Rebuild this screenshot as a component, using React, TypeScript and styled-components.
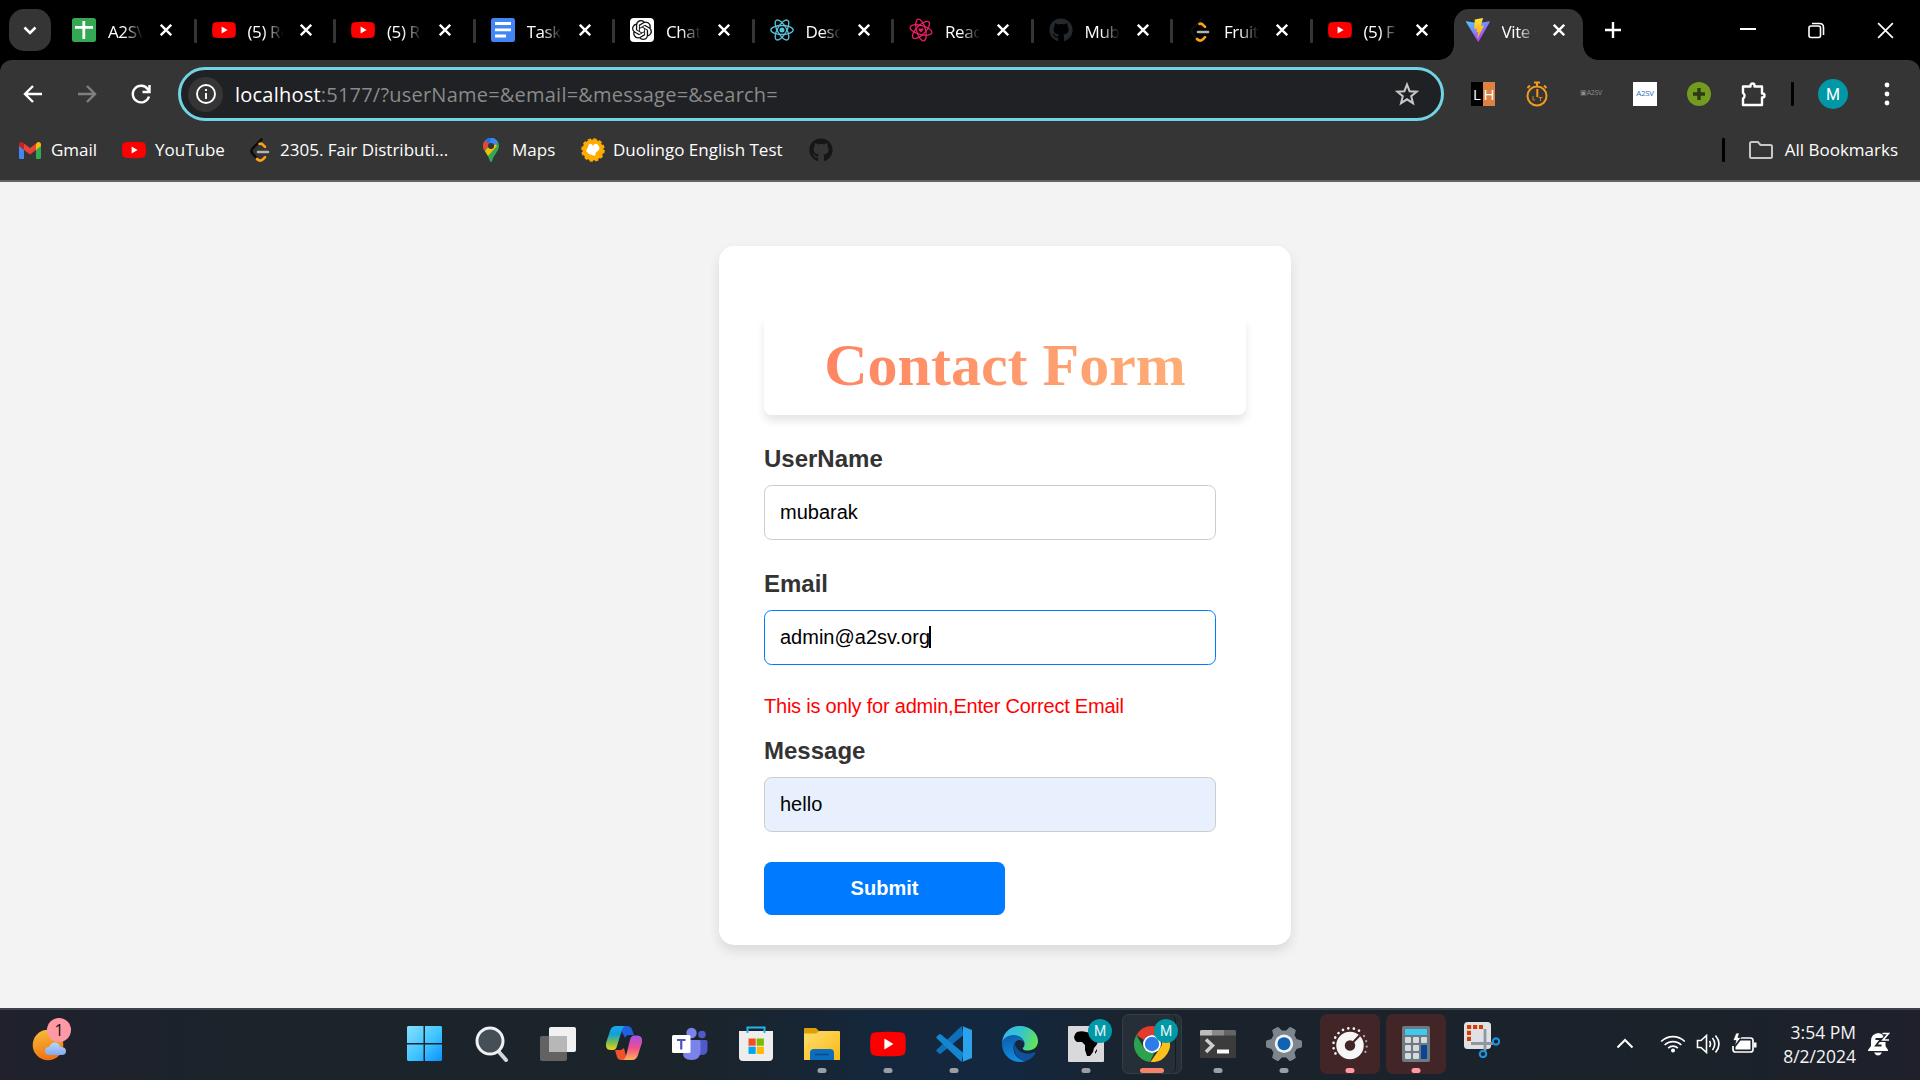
import React from "react";
import styled, { createGlobalStyle, css } from "styled-components";
import { FaGithub } from "react-icons/fa";
import { SiOpenai } from "react-icons/si";

const Global = createGlobalStyle`
  * { box-sizing: border-box; }
  html, body { margin: 0; padding: 0; }
  body { font-family: "Open Sans", "Noto Sans", sans-serif; overflow: hidden; background: #f3f3f3; }
`;

const Screen = styled.div`
  width: 1920px;
  height: 1080px;
  display: flex;
  flex-direction: column;
  overflow: hidden;
`;

/* ---------- tab strip ---------- */
const TabStrip = styled.div`
  height: 60px;
  flex: none;
  background: #000;
  display: flex;
  align-items: stretch;
`;
const TabSearch = styled.div`
  width: 42px;
  height: 42px;
  margin: 9px 6px 9px 9px;
  border-radius: 15px;
  background: #353535;
  display: grid;
  place-items: center;
`;
const Tab = styled.div<{ $active?: boolean; $line?: boolean }>`
  position: relative;
  flex: none;
  width: 139.5px;
  padding: 0 0 0 15px;
  display: flex;
  align-items: center;
  ${(p) =>
    p.$line &&
    css`
      &::after {
        content: "";
        position: absolute;
        right: 0;
        top: 19px;
        width: 3px;
        height: 24px;
        border-radius: 1px;
        background: #353535;
      }
    `}
  ${(p) =>
    p.$active &&
    css`
      width: 129px;
      margin-left: 1.5px;
      height: 51px;
      margin-top: 9px;
      padding: 0 0 9px 12px;
      border-radius: 15px 15px 0 0;
      background: #353535;
      &::before,
      &::after {
        content: "";
        position: absolute;
        bottom: 0;
        width: 15px;
        height: 15px;
      }
      &::before {
        left: -15px;
        background: radial-gradient(circle at 0 0, #000 14.5px, #353535 15px);
      }
      &::after {
        right: -15px;
        background: radial-gradient(circle at 100% 0, #000 14.5px, #353535 15px);
      }
    `}
`;
const TabTitle = styled.span`
  width: 35px;
  margin-left: 12px;
  margin-top: 4px;
  overflow: hidden;
  white-space: nowrap;
  color: #fff;
  font-size: 17px;
  line-height: 24px;
  letter-spacing: -0.4px;
  mask-image: linear-gradient(90deg, #000 45%, transparent 100%);
`;
const TabClose = styled.span<{ $active?: boolean }>`
  display: grid;
  margin-left: ${(p) => (p.$active ? 16 : 17)}px;
`;
const NewTab = styled.div`
  display: grid;
  place-items: center;
  width: 18px;
  margin-left: 21px;
`;
const WindowControls = styled.div`
  margin-left: auto;
  display: flex;
  align-items: center;
  gap: 52px;
  padding-right: 26px;
`;

/* ---------- toolbar ---------- */
const ChromeBody = styled.div`
  height: 122px;
  flex: none;
  background: #000;
  display: flex;
`;
const ToolArea = styled.div`
  flex: 1;
  background: #353535;
  border-radius: 12px 12px 0 0;
  border-bottom: 2px solid #636363;
  display: flex;
  flex-direction: column;
`;
const Toolbar = styled.div`
  height: 61px;
  padding-top: 7px;
  display: flex;
  align-items: center;
`;
const NavButtons = styled.div`
  width: 178px;
  padding-left: 21px;
  display: flex;
  gap: 30px;
`;
const Omnibox = styled.div`
  width: 1266px;
  height: 54px;
  border: 3px solid #70d4e4;
  border-radius: 27px;
  background: #202124;
  display: flex;
  align-items: center;
  padding: 0 22px 0 7px;
`;
const InfoBadge = styled.span`
  width: 35px;
  height: 35px;
  border-radius: 50%;
  background: #353535;
  display: grid;
  place-items: center;
`;
const Url = styled.span`
  flex: 1;
  margin-left: 12px;
  padding-top: 2px;
  font-size: 20px;
  line-height: 28px;
  color: #8a8a8a;
  white-space: nowrap;
  letter-spacing: 0.22px;
  b {
    font-weight: 400;
    color: #fff;
  }
`;
const Extensions = styled.div`
  display: flex;
  align-items: center;
  margin-left: 27px;
  gap: 30px;
`;
const Lh = styled.span`
  display: flex;
  width: 24px;
  height: 24px;
  font-size: 15px;
  line-height: 25px;
  color: #fff;
  text-align: center;
  i {
    font-style: normal;
    width: 12px;
    background: #000;
  }
  i + i {
    background: #dd8243;
  }
`;
const TinyLogo = styled.span<{ $light?: boolean }>`
  width: 24px;
  height: 24px;
  font-size: ${(p) => (p.$light ? 8 : 7)}px;
  letter-spacing: -0.3px;
  line-height: 22px;
  text-align: center;
  white-space: nowrap;
  font-weight: 400;
  background: ${(p) => (p.$light ? "#fff" : "transparent")};
  color: ${(p) => (p.$light ? "#2f74b8" : "#8c8c8c")};
`;
const Divider = styled.span`
  width: 3px;
  height: 24px;
  border-radius: 1px;
  background: #000;
`;
const Account = styled.div`
  display: flex;
  align-items: center;
  gap: 24px;
  margin-left: -5px;
`;
const Avatar = styled.span`
  width: 30px;
  height: 30px;
  margin-right: 12px;
  border-radius: 50%;
  background: #0097a7;
  color: #fff;
  font: 400 16px/31px Roboto, sans-serif;
  text-align: center;
`;
const BookmarkBar = styled.div`
  height: 58px;
  display: flex;
  align-items: center;
  padding: 0 22px 0 19px;
`;
const Bookmark = styled.span<{ $w: number; $gap?: number }>`
  width: ${(p) => p.$w}px;
  display: flex;
  align-items: center;
  gap: ${(p) => p.$gap ?? 9}px;
  font-size: 17px;
  line-height: 24px;
  color: #fff;
  white-space: nowrap;
  svg {
    flex: none;
  }
`;
const AllBookmarks = styled.span`
  margin-left: auto;
  display: flex;
  align-items: center;
  font-size: 17px;
  line-height: 24px;
  color: #fff;
  white-space: nowrap;
  svg {
    margin: 0 12px 0 24px;
  }
`;

/* ---------- page ---------- */
const Page = styled.main`
  height: 826px;
  flex: none;
  background: #f3f3f3;
  display: flex;
  justify-content: center;
  align-items: flex-start;
  padding: 64px 0 0 90px;
`;
const Card = styled.form`
  width: 572px;
  height: 699px;
  background: #fff;
  border-radius: 15px;
  box-shadow: 0 6px 12px rgba(0, 0, 0, 0.1);
  padding: 69px 45px 0;
  font-family: "Liberation Sans", Arial, sans-serif;
`;
const Heading = styled.h1`
  margin: 0 0 29px;
  height: 100px;
  border-radius: 7.5px;
  box-shadow: 0 6px 9px rgba(0, 0, 0, 0.1);
  text-align: center;
  font: 700 60px/101px "Liberation Serif", "Times New Roman", serif;
  span {
    display: block;
    background: linear-gradient(90deg, #ff7e5f, #feb47b);
    background-clip: text;
    -webkit-background-clip: text;
    color: transparent;
  }
`;
const Label = styled.label`
  display: block;
  height: 41px;
  font-size: 24px;
  font-weight: 700;
  line-height: 30px;
  color: #333;
`;
const Field = styled.div<{ $focus?: boolean; $filled?: boolean; $after: number }>`
  width: 452px;
  height: 55px;
  margin-bottom: ${(p) => p.$after}px;
  border: 1px solid ${(p) => (p.$focus ? "#007bff" : "#ccc")};
  border-radius: 7.5px;
  background: ${(p) => (p.$filled ? "#e8f0fe" : "#fff")};
  padding: 0 15px 2px;
  display: flex;
  align-items: center;
  font-size: 20px;
  line-height: 22px;
  color: #000;
`;
const Caret = styled.span`
  width: 2px;
  height: 22px;
  margin-left: -1px;
  background: #000;
`;
const ErrorText = styled.p`
  margin: 0 0 18px;
  font-size: 20px;
  line-height: 24px;
  letter-spacing: -0.22px;
  color: #f00;
`;
const Submit = styled.button`
  display: block;
  width: 241px;
  height: 53px;
  padding: 0 0 2px;
  border: 0;
  border-radius: 7.5px;
  background: #007bff;
  color: #fff;
  font: 700 20px/24px "Liberation Sans", Arial, sans-serif;
`;

/* ---------- taskbar ---------- */
const Taskbar = styled.footer`
  height: 72px;
  flex: none;
  border-top: 2px solid #3b4348;
  background: linear-gradient(90deg, #20212c 0, #1b232b 240px, #1b242b 700px, #14273c 880px, #13273f 1010px, #1a232c 1140px, #1a222a 1700px, #1f202b 1920px);
  display: flex;
  align-items: center;
`;
const Weather = styled.div`
  width: 396px;
  padding-left: 30px;
  display: flex;
`;
const WeatherIcon = styled.div`
  position: relative;
  width: 42px;
  height: 44px;
  margin-top: -8px;
`;
const Count = styled.span`
  position: absolute;
  right: 1px;
  top: -1px;
  width: 24px;
  height: 24px;
  border-radius: 50%;
  background: #ff99a4;
  color: #111;
  font-size: 16px;
  line-height: 24px;
  text-align: center;
`;
const Apps = styled.div`
  display: flex;
  gap: 6px;
  margin-top: -2px;
`;
const AppTile = styled.div<{ $bg?: string; $nudge?: number; $shift?: number }>`
  position: relative;
  width: 60px;
  height: 60px;
  border-radius: 7px;
  background: ${(p) => p.$bg ?? "transparent"};
  display: grid;
  place-items: center;
  & > svg {
    margin-top: ${(p) => p.$nudge ?? 0}px;
    margin-left: ${(p) => p.$shift ?? 0}px;
  }
`;
const StackEdge = styled.span`
  position: absolute;
  inset: 0;
  border: 1px solid #343c44;
  border-radius: 7px;
  &::after {
    content: "";
    position: absolute;
    top: -1px;
    bottom: -1px;
    right: 5px;
    width: 8px;
    border-right: 1px solid #151b21;
    border-radius: 0 7px 7px 0;
  }
`;
const Indicator = styled.span<{ $c: string; $w?: number }>`
  position: absolute;
  bottom: 1px;
  left: 50%;
  width: ${(p) => p.$w ?? 9}px;
  height: 5px;
  border-radius: 3px;
  transform: translateX(-50%);
  background: ${(p) => p.$c};
`;
const Badge = styled.span`
  position: absolute;
  right: 4px;
  top: 5px;
  width: 24px;
  height: 24px;
  border-radius: 50%;
  background: #0097a7;
  color: #e3f4f6;
  font: 400 14px/24px Roboto, sans-serif;
  text-align: center;
`;
const Tray = styled.div`
  margin-left: auto;
  padding-right: 30px;
  margin-top: -3px;
  display: flex;
  align-items: center;
`;
const TrayIcons = styled.div`
  display: flex;
  align-items: center;
  gap: 10px;
  margin-left: 26px;
  margin-right: 1px;
`;
const Clock = styled.div`
  width: 98px;
  margin-right: 12px;
  padding-top: 1px;
  text-align: right;
  color: #f4f4f4;
  font-size: 17.500px;
  line-height: 24px;
  letter-spacing: 0;
`;

/* ---------- icons ---------- */
const Cross = ({ s = 12, w = 2.4 }: { s?: number; w?: number }) => (
  <svg width={s} height={s} viewBox="0 0 12 12" stroke="#fff" strokeWidth={(w * 12) / s} fill="none">
    <path d="M.8.8 11.2 11.2M11.2.8.8 11.2" />
  </svg>
);
const YouTube = ({ s = 24 }: { s?: number }) => (
  <svg width={s} height={s} viewBox="0 0 24 24">
    <path fill="#f00" d="M3.5 4.2Q12 3.5 20.5 4.2 23.2 4.4 23.6 7q.5 5 0 10-.4 2.600-3.100 2.800-8.500.7-17 0Q.8 19.600.4 17q-.6-5 0-10Q.8 4.400 3.500 4.200Z" />
    <path fill="#fff" d="M9.600 8.400v7.200l6-3.600z" />
  </svg>
);
const Sheet = () => (
  <svg width="24" height="24" viewBox="0 0 24 24">
    <rect width="24" height="24" rx="2.500" fill="#34a853" />
    <path d="M11.800 3v18M3 9.300h18" stroke="#fff" strokeWidth="2.800" />
  </svg>
);
const Doc = () => (
  <svg width="24" height="24" viewBox="0 0 24 24">
    <rect width="24" height="24" rx="2.500" fill="#4285f4" />
    <path d="M4 5.500h16M4 11.800h16M4 18h11" stroke="#fff" strokeWidth="2.800" />
  </svg>
);
const Gpt = () => (
  <svg width="24" height="24" viewBox="0 0 24 24">
    <rect width="24" height="24" rx="4" fill="#fff" />
    <SiOpenai x="2" y="2" size={20} color="#111" />
  </svg>
);
const Atom = ({ c, r = 0, heart }: { c: string; r?: number; heart?: boolean }) => (
  <svg width="24" height="24" viewBox="0 0 24 24" fill="none" stroke={c} strokeWidth="1.300">
    <g transform={`rotate(${r} 12 12)`}>
      <ellipse cx="12" cy="12" rx="11.200" ry="4.500" />
      <ellipse cx="12" cy="12" rx="11.200" ry="4.500" transform="rotate(60 12 12)" />
      <ellipse cx="12" cy="12" rx="11.200" ry="4.500" transform="rotate(120 12 12)" />
    </g>
    {heart ? (
      <path d="M12 14.500 9.700 12c-.9-1.500 1.400-2.600 2.300-1 .9-1.600 3.200-.5 2.300 1z" fill={c} stroke="none" />
    ) : (
      <circle cx="12" cy="12" r="2.500" fill={c} stroke="none" />
    )}
  </svg>
);
const Leet = ({ dark }: { dark: string }) => (
  <svg width="24" height="24" viewBox="0 0 24 24" fill="none" strokeLinecap="round" strokeWidth="2.600">
    <path d="M13.500 1.500 4.500 10.500Q2.500 13 4.500 15.500L8.500 20" stroke={dark} />
    <path d="M11.500 6q2-1 3.500.8l2 2M9 21q3 3 6 .3l2-2.100" stroke="#ffa116" />
    <path d="M10 14h10" stroke="#b3b3b3" />
  </svg>
);
const Vite = () => (
  <svg width="24" height="24" viewBox="0 0 24 24">
    <defs>
      <linearGradient id="va" x1="0" y1="0" x2=".6" y2="1">
        <stop offset="0" stopColor="#41d1ff" />
        <stop offset="1" stopColor="#bd34fe" />
      </linearGradient>
      <linearGradient id="vb" x1="0" y1="0" x2="0" y2="1">
        <stop offset="0" stopColor="#ffea83" />
        <stop offset=".1" stopColor="#ffdd35" />
        <stop offset="1" stopColor="#ffa800" />
      </linearGradient>
    </defs>
    <path fill="url(#va)" d="M.3 3.200 12 5.200 23.500 3.200q.5.100.3.700L12.700 23.600q-.4.500-.8 0L0 3.900q-.2-.600.3-.7Z" />
    <path fill="url(#vb)" d="m17 0-8.200 1.600L8.200 11l2.800-.5-.8 4 2.200-.6-1.200 5.500q.3 1.200 1.100-.1L18 7.500l-3 .5z" />
  </svg>
);
const Gmail = () => (
  <svg width="22" height="17" viewBox="0 0 22 17">
    <path fill="#4285f4" d="M0 3v12.500Q0 17 1.500 17H5V7z" />
    <path fill="#34a853" d="M22 3v12.500q0 1.500-1.500 1.500H17V7z" />
    <path fill="#fbbc04" d="M17 2v6l5-4V2.400C22 .2 19.500-.7 17.800.7z" />
    <path fill="#ea4335" d="M5 8V1.500l6 4.500 6-4.500V8l-6 4.500z" />
    <path fill="#c5221f" d="M0 2.400V4l5 4V1.500L4.200.8C2.500-.6 0 .2 0 2.400Z" />
  </svg>
);
const MapPin = () => (
  <svg width="16" height="24" viewBox="0 0 16 24">
    <defs>
      <clipPath id="pin">
        <path d="M8 0a8 8 0 0 1 8 8c0 5-5 8-6.700 14.600q-.3 1.400-1.300 1.400t-1.300-1.400C5 16 0 13 0 8a8 8 0 0 1 8-8Z" />
      </clipPath>
    </defs>
    <g clipPath="url(#pin)">
      <path fill="#34a853" d="M0 0h16v24H0z" />
      <path fill="#4285f4" d="M2 0h13v4L8 11 2 4z" />
      <path fill="#1a73e8" d="M8 0h-6v4l4 3z" />
      <path fill="#ea4335" d="M0 0 2 2.500 6.500 6 2 12H0z" />
      <path fill="#fbbc04" d="m2 13 8-9 4 4-9 10z" />
      <path fill="#4285f4" d="M11 0 14.500 3.500 10 9 8 5z" />
    </g>
    <circle cx="8" cy="8" r="3" fill="#3a3335" />
  </svg>
);
const Duo = () => (
  <svg width="24" height="24" viewBox="0 0 24 24">
    <circle cx="12" cy="12" r="10.600" fill="#ffab00" stroke="#ffab00" strokeWidth="2.400" strokeDasharray="3.300 2.250" />
    <path fill="#fff" d="M8 6q3-1 4 2 2-4 5-1 3 3 0 6l-2 1-1 4-3-1-3-1-3-3 1-2 1-2z" />
  </svg>
);
const Stopwatch = () => (
  <svg width="24" height="26" viewBox="0 0 24 26" fill="none" stroke="#f39a1e" strokeWidth="2">
    <circle cx="12" cy="15" r="9.500" />
    <path d="M9 1.500h6M12 2v4M2.500 7 5 4.500M21.500 7 19 4.500M12.300 8v8" />
    <path d="M8 15v4h2M13.500 16.500h4M15.500 17v3" stroke="#c9852c" strokeWidth="1" />
  </svg>
);

const TABS: { title: string; icon: React.ReactNode }[] = [
  { title: "A2SV", icon: <Sheet /> },
  { title: "(5) Re", icon: <YouTube /> },
  { title: "(5) Re", icon: <YouTube /> },
  { title: "Task", icon: <Doc /> },
  { title: "Chat", icon: <Gpt /> },
  { title: "Desc", icon: <Atom c="#58c4dc" /> },
  { title: "Reac", icon: <Atom c="#e91e63" r={15} heart /> },
  { title: "Mub", icon: <FaGithub size={24} color="#24292e" /> },
  { title: "Fruit", icon: <Leet dark="#0d0d0d" /> },
  { title: "(5) F", icon: <YouTube /> },
];

const GREY = "#999fa5";
const PINK = "#ff99a4";

const WinStart = () => (
  <svg width="36" height="36" viewBox="0 0 36 36">
    <defs>
      <linearGradient id="ws" x1="0" y1="0" x2="1" y2="1">
        <stop offset="0" stopColor="#86e0ff" />
        <stop offset=".55" stopColor="#3fc4ff" />
        <stop offset="1" stopColor="#0a92ff" />
      </linearGradient>
    </defs>
    <path fill="url(#ws)" d="M1 0h15.500v17H0V1zM18 0h16l1 1v16H18zM0 18.500h16.500V35H1l-1-1zM18 18.500h17V34l-1 1H18z" />
  </svg>
);
const Search = () => (
  <svg width="34" height="36" viewBox="0 0 34 36">
    <path d="m24 26 7 8" stroke="#d4d7dc" strokeWidth="4" strokeLinecap="round" />
    <circle cx="15" cy="15" r="13" fill="#464e56" stroke="#f0f1f3" strokeWidth="3" />
  </svg>
);
const TaskView = () => (
  <svg width="36" height="36" viewBox="0 0 36 36">
    <rect x="0" y="10" width="27" height="25" rx="2" fill="#626262" />
    <rect x="9" y="1" width="27" height="25" rx="2" fill="#f1f1f1" />
    <path d="M9 10h18v16H9z" fill="#b7b7b7" />
  </svg>
);
const Copilot = () => (
  <svg width="36" height="34" viewBox="0 0 36 34">
    <defs>
      <linearGradient id="ca" x1="0" y1="0" x2="0" y2="1">
        <stop offset="0" stopColor="#16a8f0" />
        <stop offset=".35" stopColor="#129fd8" />
        <stop offset=".7" stopColor="#7cc04b" />
        <stop offset="1" stopColor="#f6d11c" />
      </linearGradient>
      <linearGradient id="cb" x1="0" y1="0" x2="0" y2="1">
        <stop offset="0" stopColor="#a650e8" />
        <stop offset=".5" stopColor="#ee4f8e" />
        <stop offset="1" stopColor="#ffb057" />
      </linearGradient>
    </defs>
    <path fill="#1f5fe0" d="M13 0h8q4 0 5.200 4L28 9h-5q-3 0-4 3z" />
    <path fill="#f0522c" d="M9 24h6l3-2 3 12h-6q-3 0-4-3z" />
    <path fill="url(#ca)" d="M10 0h9q-2 1-3 4l-5 16q-1 4-4 4H5q-6 0-5-7L4 5q1.500-5 6-5Z" />
    <path fill="url(#cb)" d="M26 34h-9q2-1 3-4l4-16q1-4.500 4-4.500h3q6 0 5 7L32 29q-1.500 5-6 5Z" />
  </svg>
);
const Teams = () => (
  <svg width="36" height="34" viewBox="0 0 36 34">
    <circle cx="30" cy="7.500" r="3.800" fill="#5059c9" />
    <path d="M25 13h9q1.500 0 1.500 1.500V22q0 6-6 6h-4.500z" fill="#5059c9" />
    <circle cx="19.500" cy="6" r="5.200" fill="#7b83eb" />
    <path d="M11 13h16q1.500 0 1.500 1.500V24q0 9-9 9t-8.500-8z" fill="#7b83eb" />
    <rect x="0" y="8" width="18.500" height="18" rx="1.500" fill="#fff" />
    <path d="M5 13h8.500M9.250 13v9.500" stroke="#4b53bc" strokeWidth="2.200" />
  </svg>
);
const Store = () => (
  <svg width="36" height="36" viewBox="0 0 36 36">
    <path d="M1 5h34v26q0 4-4 4H5q-4 0-4-4z" fill="#ededed" />
    <path d="M9.500 7V1.500h17V7" fill="none" stroke="#22b4ea" strokeWidth="2" />
    <path fill="#f25022" d="M10.500 12.500h7.200v7.200h-7.200z" />
    <path fill="#7fba00" d="M18.700 12.500h7.200v7.200h-7.200z" />
    <path fill="#00a4ef" d="M10.500 20.700h7.200v7.200h-7.200z" />
    <path fill="#ffb900" d="M18.700 20.700h7.200v7.200h-7.200z" />
  </svg>
);
const Explorer = () => (
  <svg width="36" height="34" viewBox="0 0 36 34">
    <defs>
      <linearGradient id="ex" x1="0" y1="0" x2="1" y2="1">
        <stop offset="0" stopColor="#ffdd70" />
        <stop offset="1" stopColor="#f9b912" />
      </linearGradient>
    </defs>
    <path d="M0 1.500Q0 1 1 1h11l3 3h20v10H0z" fill="#dd9f08" />
    <path d="M0 6.500h12L15.500 4H35q1 0 1 1v28H0z" fill="url(#ex)" />
    <path d="M6 33v-7q0-4 4-4h16q4 0 4 4v7z" fill="#0c6dbc" />
    <path d="M11 27.500h14" stroke="#0a4a86" strokeWidth="1.500" />
  </svg>
);
const Code = () => (
  <svg width="36" height="36" viewBox="0 0 36 36">
    <path fill="#0f6fb8" d="M.7 25.500q-.9-1 .2-2L25.500 0l2 9L5 27.500q-1 .8-2 0z" />
    <path fill="#1485cf" d="M.7 10.500q-.9 1 .2 2L25.500 36l2-9L5 8.500q-1-.8-2 0z" />
    <path fill="#2ba3ec" d="M26 0 36 4v28l-10 4q1-.5 1-2V2q0-1.500-1-2z" />
  </svg>
);
const Edge = () => (
  <svg width="36" height="36" viewBox="0 0 36 36">
    <defs>
      <linearGradient id="ea" x1="0" y1=".3" x2="1" y2=".6">
        <stop offset="0" stopColor="#37b5ee" />
        <stop offset=".5" stopColor="#36c6c8" />
        <stop offset="1" stopColor="#66e355" />
      </linearGradient>
      <linearGradient id="eb" x1="0" y1="0" x2=".3" y2="1">
        <stop offset="0" stopColor="#0a5aa8" />
        <stop offset="1" stopColor="#128be0" />
      </linearGradient>
    </defs>
    <path fill="url(#ea)" d="M0 17C1 6 9 0 18 0c10 0 18 7 18 15 0 6-4.500 9.500-10 9.500-4 0-6-1.500-5-2.700 1-1 1.500-2 1.500-3.800 0-4-4-8-10-8C6 10 2 13 0 17Z" />
    <path fill="url(#eb)" d="M0 18c0-5 5-9 12-9 6 0 10 4 10.500 8-1-2-3-3-5-3-4 0-6 4-6 8 0 7 5 12 12 13.300C20 36.200 18 36 18 36 8 36 0 28 0 18Z" />
    <path fill="#0e509a" d="M13 17c-3 7 1 17 11 18 5-1.500 8-5 9.500-8 .3-.8-.4-1-1-.7C25 29.500 14 27 13 17Z" />
  </svg>
);
const Africa = () => (
  <svg width="36" height="36" viewBox="0 0 36 36">
    <rect width="36" height="36" rx="1" fill="#d9d9dc" />
    <path d="M9 6q5-1.500 9 0l5 1 3 8 4 1q-1 3-4 6l-1 4-3 4h-3l-2-6v-5l-3-3H9q-3-2-3-5 1-4 3-5z" fill="#000" />
    <path d="m27 26 2-3v2l-2 3z" fill="#000" />
  </svg>
);
const Chrome = () => (
  <svg width="36" height="36" viewBox="0 0 36 36">
    <path fill="#e33b2e" d="M18 0a18 18 0 0 1 15.600 9H18a9 9 0 0 0-8 5L2.400 9A18 18 0 0 1 18 0Z" />
    <path fill="#2ba24c" d="M2.400 9 10.200 22.500a9 9 0 0 0 10.300 4L16 36A18 18 0 0 1 2.400 9Z" />
    <path fill="#fcc21b" d="M33.600 9A18 18 0 0 1 16.500 36l9.300-13.500A9 9 0 0 0 24 9z" />
    <circle cx="18" cy="18" r="9" fill="#fff" />
    <circle cx="18" cy="18" r="7.200" fill="#2b7de9" />
  </svg>
);
const Terminal = () => (
  <svg width="36" height="28" viewBox="0 0 36 28">
    <rect y="1" width="36" height="27" rx="1.500" fill="#3c3c3c" />
    <path d="M1 0h11v5.500H0V1z" fill="#bcbcbc" />
    <path d="M12 0h12v5.500H12z" fill="#8a8a8a" />
    <path d="M24 0h11l1 1v4.500H24z" fill="#646464" />
    <path d="m6 9.500 6.500 6L6 22" fill="none" stroke="#cfcfcf" strokeWidth="3.500" />
    <path d="M17 19.500h12v4H17z" fill="#fafafa" />
  </svg>
);
const Gear = () => (
  <svg width="36" height="36" viewBox="0 0 36 36">
    <g fill="#7d868f">
      <circle cx="18" cy="18" r="13.500" />
      {[0, 60, 120, 180, 240, 300].map((a) => (
        <path key={a} transform={`rotate(${a + 30} 18 18)`} d="M12.500 8 14.200 1.200Q14.500 0 15.700 0h4.600q1.200 0 1.500 1.200L23.500 8z" />
      ))}
    </g>
    <circle cx="18" cy="17.700" r="9.200" fill="#f1f1f1" />
    <circle cx="18" cy="17.700" r="6.500" fill="#0f62b4" />
  </svg>
);
const Dial = () => (
  <svg width="36" height="36" viewBox="0 0 36 36">
    <circle cx="18" cy="19.500" r="9.500" fill="none" stroke="#f6f6f6" strokeWidth="8.500" />
    <path d="m18 19.500 9.500-10" stroke="#432425" strokeWidth="2" />
    <path d="M3.500 27.500A17 17 0 0 1 29 6" fill="none" stroke="#f6f6f6" strokeWidth="2.600" strokeLinecap="round" strokeDasharray=".1 5.400" />
    <path d="M32 10A17 17 0 0 1 32 28.500" fill="none" stroke="#b6a5a6" strokeWidth="2.200" strokeLinecap="round" strokeDasharray=".1 5.400" />
  </svg>
);
const Calc = () => (
  <svg width="28" height="36" viewBox="0 0 28 36">
    <rect width="28" height="36" rx="2" fill="#6f7981" />
    <rect x="3" y="3" width="22" height="6" rx=".8" fill="#3ccbee" />
    <g fill="#d5dade">
      {[11, 19, 27].map((y) =>
        [3, 11, 19].map((x) => (x === 19 && y > 11 ? null : <rect key={`${x}-${y}`} x={x} y={y} width="6" height="6" rx="1" />)),
      )}
    </g>
    <rect x="19" y="19" width="6" height="14" rx="1" fill="#0a4595" />
  </svg>
);
const Snip = () => (
  <svg width="36" height="36" viewBox="0 0 36 36">
    <rect x="0" y="0" width="27" height="27" rx="3.500" fill="#dfe2e5" />
    <path d="M5 19V5h14" fill="none" stroke="#d83b01" strokeWidth="4" strokeDasharray="4.200 1.800" />
    <path d="M21 7v22M7 21.500h22" stroke="#90989f" strokeWidth="2.800" />
    <circle cx="32" cy="19.500" r="3.200" fill="none" stroke="#1e90e0" strokeWidth="2.200" />
    <circle cx="19" cy="32" r="3.200" fill="none" stroke="#1e90e0" strokeWidth="2.200" />
  </svg>
);

type AppEntry = {
  icon: React.ReactNode;
  bg?: string;
  mark?: string;
  markWidth?: number;
  badge?: boolean;
  nudge?: number;
  shift?: number;
  stack?: boolean;
};
const APPS: AppEntry[] = [
  { icon: <WinStart />, shift: -3 },
  { icon: <Search /> },
  { icon: <TaskView /> },
  { icon: <Copilot />, nudge: -2 },
  { icon: <Teams /> },
  { icon: <Store />, shift: -1 },
  { icon: <Explorer />, mark: GREY },
  { icon: <YouTube s={36} />, mark: GREY },
  { icon: <Code />, mark: GREY },
  { icon: <Edge /> },
  { icon: <Africa />, mark: GREY, badge: true },
  { icon: <Chrome />, mark: "#f9826a", markWidth: 24, badge: true, bg: "#262f37", stack: true },
  { icon: <Terminal />, mark: GREY },
  { icon: <Gear />, mark: GREY },
  { icon: <Dial />, mark: PINK, bg: "#422526" },
  { icon: <Calc />, mark: PINK, bg: "#422526" },
  { icon: <Snip />, nudge: -9 },
];

export default function App() {
  return (
    <Screen>
      <Global />
      <TabStrip>
        <TabSearch>
          <svg width="14" height="9" viewBox="0 0 14 9" fill="none" stroke="#fff" strokeWidth="2.600">
            <path d="m1.500 1.500 5.500 5.500 5.500-5.500" />
          </svg>
        </TabSearch>
        {TABS.map((t, i) => (
          <Tab key={i} $line={i < TABS.length - 1}>
            {t.icon}
            <TabTitle>{t.title}</TabTitle>
            <TabClose><Cross /></TabClose>
          </Tab>
        ))}
        <Tab $active>
          <Vite />
          <TabTitle>Vite +</TabTitle>
          <TabClose $active><Cross /></TabClose>
        </Tab>
        <NewTab>
          <svg width="16" height="16" viewBox="0 0 16 16" stroke="#fff" strokeWidth="2.400">
            <path d="M8 0v16M0 8h16" />
          </svg>
        </NewTab>
        <WindowControls>
          <svg width="16" height="16" viewBox="0 0 16 16"><path d="M0 7h16" stroke="#fff" strokeWidth="2" /></svg>
          <svg width="17" height="17" viewBox="0 0 17 17" fill="none" stroke="#fff" strokeWidth="1.600">
            <rect x="1" y="4" width="11.500" height="11.500" rx="2" />
            <path d="M4 1.500h7.500q4 0 4 4V13" />
          </svg>
          <Cross s={17} w={1.7} />
        </WindowControls>
      </TabStrip>

      <ChromeBody>
        <ToolArea>
          <Toolbar>
            <NavButtons>
              <svg width="24" height="24" viewBox="0 0 24 24" fill="none" stroke="#fff" strokeWidth="2.400"><path d="M21 12H4.500M12 4l-8 8 8 8" /></svg>
              <svg width="24" height="24" viewBox="0 0 24 24" fill="none" stroke="#808080" strokeWidth="2.400"><path d="M3 12h16.500M12 4l8 8-8 8" /></svg>
              <svg width="24" height="24" viewBox="0 0 24 24" fill="none" stroke="#fff" strokeWidth="2.400"><path d="M20 14.500a8.300 8.300 0 1 1-1.200-7.300L20.500 9M20.500 3v7h-7" /></svg>
            </NavButtons>
            <Omnibox>
              <InfoBadge>
                <svg width="20" height="20" viewBox="0 0 20 20" fill="none" stroke="#fff" strokeWidth="1.900"><circle cx="10" cy="10" r="9" /><path d="M10 9v6M10 5v2" /></svg>
              </InfoBadge>
              <Url><b>localhost</b>:5177/?userName=&amp;email=&amp;message=&amp;search=</Url>
              <svg width="24" height="24" viewBox="0 0 24 24" fill="none" stroke="#c7c7c7" strokeWidth="2"><path d="m12 2.500 2.600 6.700 7.100.5-5.500 4.500 1.800 7-6-3.900-6 3.900 1.800-7L2.300 9.700l7.100-.5z" /></svg>
            </Omnibox>
            <Extensions>
              <Lh><i>L</i><i>H</i></Lh>
              <Stopwatch />
              <TinyLogo>▣A2SV</TinyLogo>
              <TinyLogo $light>A2SV</TinyLogo>
              <svg width="24" height="24" viewBox="0 0 24 24"><circle cx="12" cy="12" r="12" fill="#739b20" /><path d="M12 6v12M6 12h12" stroke="#2c3a12" strokeWidth="3.400" /></svg>
              <svg width="25" height="25" viewBox="0 0 25 25" fill="none" stroke="#fff" strokeWidth="2.400"><path d="M2 4.500h7.500v-1a2 2 0 0 1 4 0v1H21v7h.5a2 2 0 0 1 0 4H21V23H2v-6.500a3.200 3.200 0 0 0 0-5.500z" strokeLinejoin="round" /></svg>
              <Account>
                <Divider />
                <Avatar>M</Avatar>
                <svg width="6" height="24" viewBox="0 0 6 24" fill="#fff"><circle cx="3" cy="3" r="2.400" /><circle cx="3" cy="12" r="2.400" /><circle cx="3" cy="21" r="2.400" /></svg>
              </Account>
            </Extensions>
          </Toolbar>
          <BookmarkBar>
            <Bookmark $w={103} $gap={10}><Gmail />Gmail</Bookmark>
            <Bookmark $w={126}><YouTube />YouTube</Bookmark>
            <Bookmark $w={235} $gap={8}><Leet dark="#0c0c0c" />2305. Fair Distributi...</Bookmark>
            <Bookmark $w={98} $gap={13}><MapPin />Maps</Bookmark>
            <Bookmark $w={228} $gap={8}><Duo />Duolingo English Test</Bookmark>
            <FaGithub size={24} color="#161616" />
            <AllBookmarks>
              <Divider />
              <svg width="24" height="18" viewBox="0 0 24 18" fill="none" stroke="#c7c7c7" strokeWidth="2"><path d="M1 2.500Q1 1 2.500 1H9l2.500 3h10Q23 4 23 5.500v10q0 1.500-1.500 1.500h-19Q1 17 1 15.500z" /></svg>
              All Bookmarks
            </AllBookmarks>
          </BookmarkBar>
        </ToolArea>
      </ChromeBody>

      <Page>
        <Card>
          <Heading><span>Contact Form</span></Heading>
          <Label>UserName</Label>
          <Field $after={29}>mubarak</Field>
          <Label>Email</Label>
          <Field $focus $after={29}>admin@a2sv.org<Caret /></Field>
          <ErrorText>This is only for admin,Enter Correct Email</ErrorText>
          <Label>Message</Label>
          <Field $filled $after={30}>hello</Field>
          <Submit type="button">Submit</Submit>
        </Card>
      </Page>

      <Taskbar>
        <Weather>
          <WeatherIcon>
            <svg width="42" height="44" viewBox="0 0 42 44">
              <defs>
                <linearGradient id="sun" x1=".3" y1="0" x2=".5" y2="1"><stop offset="0" stopColor="#f5bb3a" /><stop offset="1" stopColor="#f2700e" /></linearGradient>
                <linearGradient id="cl" x1="0" y1="0" x2="0" y2="1"><stop offset="0" stopColor="#b9d6fb" /><stop offset="1" stopColor="#80aaf0" /></linearGradient>
              </defs>
              <circle cx="18" cy="26" r="15.300" fill="url(#sun)" />
              <path d="M19 36q-4 0-4-4t4-4q2-4.500 6-4.500t5.500 4.500q5.500 0 5.500 4t-4 4z" fill="url(#cl)" />
            </svg>
            <Count>1</Count>
          </WeatherIcon>
        </Weather>
        <Apps>
          {APPS.map((a, i) => (
            <AppTile key={i} $bg={a.bg} $nudge={a.nudge} $shift={a.shift}>
              {a.stack && <StackEdge />}
              {a.icon}
              {a.badge && <Badge>M</Badge>}
              {a.mark && <Indicator $c={a.mark} $w={a.markWidth} />}
            </AppTile>
          ))}
        </Apps>
        <Tray>
          <svg width="18" height="11" viewBox="0 0 18 11" fill="none" stroke="#fff" strokeWidth="2"><path d="m1.500 9.500 7.500-7.500 7.500 7.500" /></svg>
          <TrayIcons>
            <svg width="26" height="19" viewBox="0 0 26 19" fill="none" stroke="#fff" strokeWidth="1.700"><path d="M1.200 7.500a16.700 16.700 0 0 1 23.600 0M4.700 11a11.700 11.700 0 0 1 16.600 0M8.200 14.200a6.700 6.700 0 0 1 9.600 0" /><circle cx="13" cy="16.500" r="2" fill="#fff" stroke="none" /></svg>
            <svg width="25" height="20" viewBox="0 0 25 20" fill="none" stroke="#fff" strokeWidth="1.600"><path d="M1.500 6.500H5l5.500-5v17L5 13.500H1.500zM13.500 7q2 3 0 6M16.500 4q4.500 6 0 12M19.500 1.500q7 8.500 0 17" /></svg>
            <svg width="26" height="22" viewBox="0 0 26 22" fill="none" stroke="#fff" strokeWidth="1.700"><path d="M9 5h10.500q2.500 0 2.500 2.500v9q0 2.500-2.500 2.500h-15Q2 19 2 16.500V13" /><path d="M9.500 7.500h10v9h-15V14z" fill="#fff" stroke="none" /><path d="M23 9.500h2.500v5H23z" fill="#fff" stroke="none" /><path d="M5 0h3.500L7 4.500h3L3.500 13 5 7.500H2z" fill="#fff" stroke="#1b222b" strokeWidth=".8" /></svg>
          </TrayIcons>
          <Clock>3:54 PM<br />8/2/2024</Clock>
          <svg width="22" height="25" viewBox="0 0 22 25">
            <path d="M10 2Q3 3 3 10v5L0 19v1h20v-1l-2.500-4V8Q15 2 10 2Z" fill="#fff" />
            <path d="M6 21.500h8q-1.500 3-4 3t-4-3Z" fill="#fff" />
            <path d="M7.500 8h5.500L8 14.500h5.500" fill="none" stroke="#1b222b" strokeWidth="1.800" />
            <path d="M14.500 2.500h6L15 9h6" fill="none" stroke="#1b222b" strokeWidth="4" />
            <path d="M14.500 2.500h6L15 9h6" fill="none" stroke="#fff" strokeWidth="1.700" />
          </svg>
        </Tray>
      </Taskbar>
    </Screen>
  );
}
